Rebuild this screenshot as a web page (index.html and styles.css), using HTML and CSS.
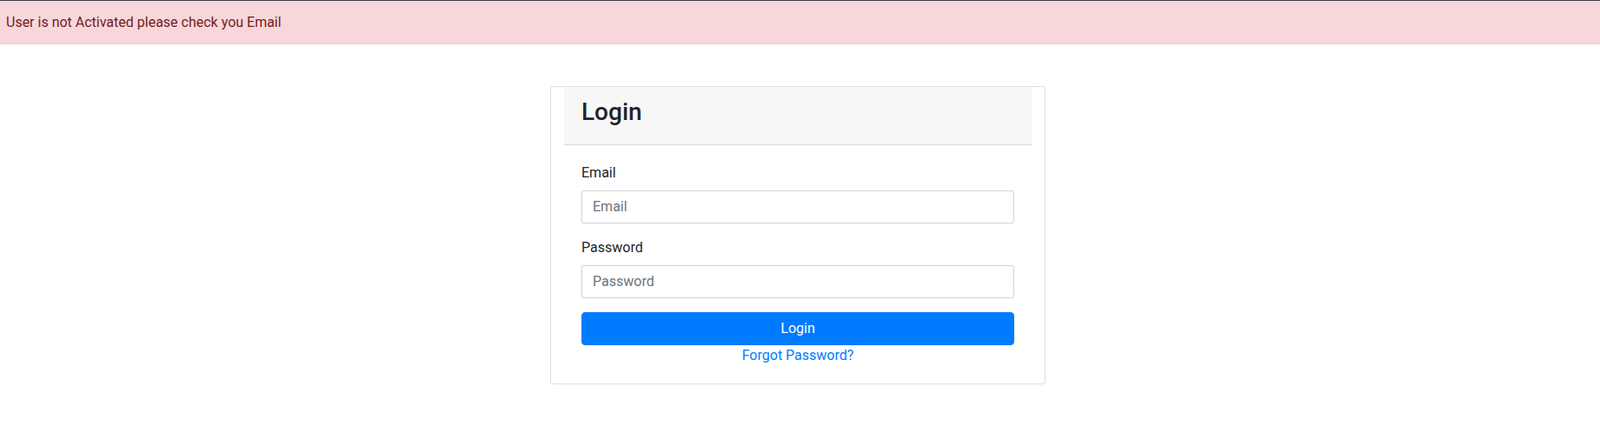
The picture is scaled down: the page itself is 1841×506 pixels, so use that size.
FILE: index.html
```html
<!DOCTYPE html>
<html lang="en">
<head>
<meta charset="utf-8">
<title>Login</title>
<link rel="stylesheet" href="styles.css">
</head>
<body>
<div class="topline"></div>
<div class="alert">User is not Activated please check you Email</div>
<div class="wrap">
  <div class="card">
    <div class="card-header">
      <h3 class="title">Login</h3>
    </div>
    <form class="card-body">
      <div class="form-group">
        <label class="label" for="email">Email</label>
        <input class="input" id="email" type="email" placeholder="Email">
      </div>
      <div class="form-group">
        <label class="label" for="password">Password</label>
        <input class="input" id="password" type="password" placeholder="Password">
      </div>
      <button class="btn" type="button">Login</button>
      <div class="forgot"><a class="link" href="#">Forgot Password?</a></div>
    </form>
  </div>
</div>
</body>
</html>
```

FILE: styles.css
```css
* { box-sizing: border-box; }
html, body {
  margin: 0;
  padding: 0;
  background: #fff;
}
body {
  font-family: Roboto, "Liberation Sans", Arial, sans-serif;
  font-size: 16px;
  line-height: 1.5;
  color: #212529;
}
.topline {
  height: 1px;
  background: #3a3f44;
}
.alert {
  background: #f8d7da;
  color: #721c24;
  border-bottom: 1px solid #f5c6cb;
  padding: 13px 7px 12px;
  line-height: 24px;
}
.wrap {
  display: flex;
  justify-content: center;
  padding-right: 5px;
  margin-top: 48px;
}
.card {
  width: 570px;
  border: 1px solid rgba(0, 0, 0, 0.125);
  border-radius: 4px;
  padding: 0 15px;
  background: #fff;
}
.card-header {
  background: #f7f7f7;
  border-bottom: 1px solid rgba(0, 0, 0, 0.125);
  padding: 12px 20px;
  border-radius: 3px 3px 0 0;
}
.title {
  margin: 0 0 8px;
  font-size: 28px;
  font-weight: 500;
  line-height: 1.2;
  color: #212529;
}
.card-body {
  display: block;
  padding: 20px;
  margin: 0;
}
.form-group {
  margin-bottom: 16px;
}
.label {
  display: block;
  margin-bottom: 8px;
  line-height: 24px;
}
.input {
  display: block;
  width: 100%;
  height: 38px;
  padding: 6px 12px;
  font-family: inherit;
  font-size: 16px;
  line-height: 1.5;
  color: #495057;
  background: #fff;
  border: 1px solid #ced4da;
  border-radius: 2px;
  outline: none;
}
.input::placeholder {
  color: #6c757d;
  opacity: 1;
}
.btn {
  display: block;
  width: 100%;
  height: 38px;
  padding: 6px 12px;
  font-family: inherit;
  font-size: 16px;
  line-height: 1.5;
  color: #fff;
  background: #007bff;
  border: 1px solid #007bff;
  border-radius: 4px;
  cursor: pointer;
}
.forgot {
  text-align: center;
  line-height: 24px;
}
.link {
  color: #007bff;
  text-decoration: none;
}
```
